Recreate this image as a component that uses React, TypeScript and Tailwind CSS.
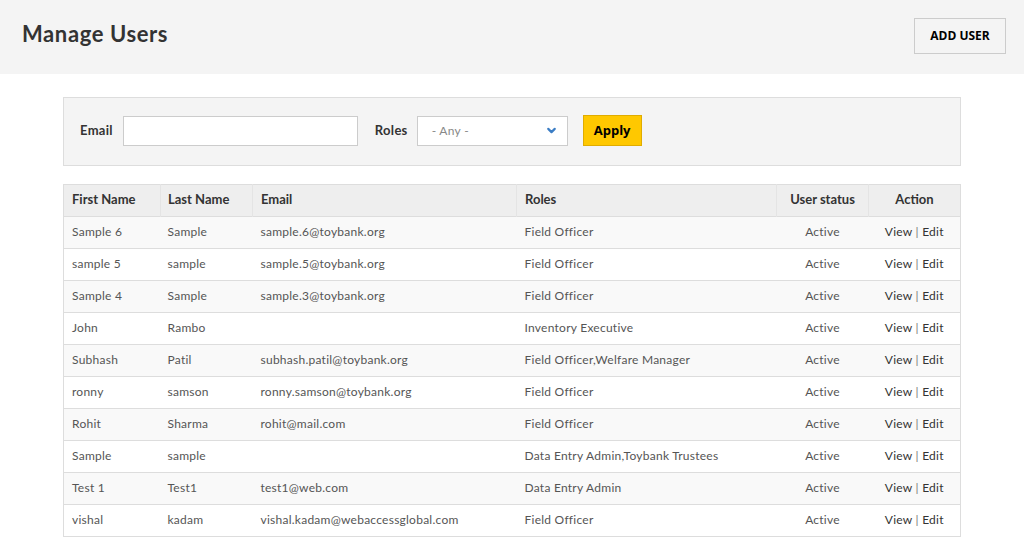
import React from "react";
import { ChevronDown } from "lucide-react";

const rows = [
  ["Sample 6", "Sample", "sample.6@toybank.org", "Field Officer"],
  ["sample 5", "sample", "sample.5@toybank.org", "Field Officer"],
  ["Sample 4", "Sample", "sample.3@toybank.org", "Field Officer"],
  ["John", "Rambo", "", "Inventory Executive"],
  ["Subhash", "Patil", "subhash.patil@toybank.org", "Field Officer,Welfare Manager"],
  ["ronny", "samson", "ronny.samson@toybank.org", "Field Officer"],
  ["Rohit", "Sharma", "rohit@mail.com", "Field Officer"],
  ["Sample", "sample", "", "Data Entry Admin,Toybank Trustees"],
  ["Test 1", "Test1", "test1@web.com", "Data Entry Admin"],
  ["vishal", "kadam", "vishal.kadam@webaccessglobal.com", "Field Officer"],
];

const font = { fontFamily: "Lato, 'Open Sans', sans-serif" };

export default function App() {
  return (
    <div className="w-[1024px] h-[555px] bg-white overflow-hidden" style={font}>
      <header className="h-[74px] bg-[#f4f4f4] flex items-center justify-between pl-[22px] pr-[18px]">
        <h1 className="text-[22px] font-bold text-[#333] tracking-[0.6px] -mt-[7px]">Manage Users</h1>
        <button
          className="w-[92px] h-[36px] border border-[#cccccc] bg-[#f4f4f4] text-[12px] font-bold text-black -mt-[3px]"
          style={{ fontFamily: "'Open Sans', sans-serif" }}
        >
          ADD USER
        </button>
      </header>

      <div className="px-[63px] pt-[23px]">
        <div className="h-[69px] bg-[#f4f4f4] border border-[#dddddd] flex items-center pl-[16px] pb-[2px]">
          <label className="text-[13px] font-bold text-[#333] mr-[10px] tracking-[0.3px]">Email</label>
          <input className="w-[235px] h-[30px] bg-white border border-[#cccccc] outline-none" />
          <label className="text-[13px] font-bold text-[#333] ml-[17px] mr-[9px] tracking-[0.3px]">Roles</label>
          <div className="w-[151px] h-[30px] bg-white border border-[#cccccc] flex items-center justify-between pl-[14px] pr-[9px]">
            <span className="text-[12px] text-[#888] tracking-[0.3px]">- Any -</span>
            <ChevronDown size={13} strokeWidth={4} color="#3b7dc4" />
          </div>
          <button
            className="ml-[15px] w-[59px] h-[31px] bg-[#ffc800] border border-[#e0ac00] text-[13px] font-bold text-black"
            style={{ fontFamily: "'Open Sans', sans-serif" }}
          >
            Apply
          </button>
        </div>

        <table className="mt-[18px] w-[897px] table-fixed border-collapse border border-[#dddddd] text-[12px] tracking-[0.25px]">
          <colgroup>
            <col className="w-[97px]" />
            <col className="w-[92px]" />
            <col className="w-[264px]" />
            <col className="w-[260px]" />
            <col className="w-[92px]" />
            <col className="w-[92px]" />
          </colgroup>
          <thead>
            <tr className="h-[32px] bg-[#eeeeee] text-[13px] font-bold text-[#333]">
              <th className="text-left pl-[8px] pb-[1px] border-r border-[#e4e4e4] font-bold tracking-normal">First Name</th>
              <th className="text-left pl-[7px] pb-[1px] border-r border-[#e4e4e4] font-bold tracking-normal">Last Name</th>
              <th className="text-left pl-[8px] pb-[1px] border-r border-[#e4e4e4] font-bold tracking-normal">Email</th>
              <th className="text-left pl-[8px] pb-[1px] border-r border-[#e4e4e4] font-bold tracking-normal">Roles</th>
              <th className="text-center pb-[1px] border-r border-[#e4e4e4] font-bold tracking-normal">User status</th>
              <th className="text-center pb-[1px] font-bold tracking-normal">Action</th>
            </tr>
          </thead>
          <tbody>
            {rows.map((r, i) => (
              <tr
                key={i}
                className={`h-[32px] border-t border-[#dddddd] ${i % 2 === 0 ? "bg-[#f9f9f9]" : "bg-white"} text-[#555]`}
              >
                <td className="pl-[8px] pb-[1px]">{r[0]}</td>
                <td className="pl-[7px] pb-[1px]">{r[1]}</td>
                <td className="pl-[8px] pb-[1px]">{r[2]}</td>
                <td className="pl-[8px] pb-[1px]">{r[3]}</td>
                <td className="text-center pb-[1px]">Active</td>
                <td className="text-center pb-[1px] text-[#333]">
                  View <span className="text-[#777]">|</span> Edit
                </td>
              </tr>
            ))}
          </tbody>
        </table>
      </div>
    </div>
  );
}
